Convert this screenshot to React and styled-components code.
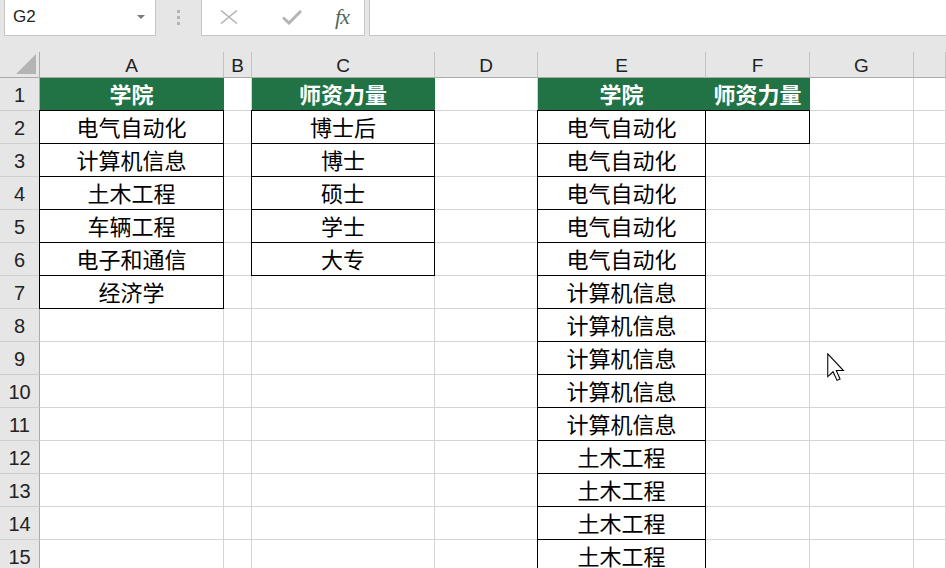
import React from 'react'
import styled, {createGlobalStyle, css} from 'styled-components'

const GlobalStyle = createGlobalStyle`
  html, body {
    margin: 0;
    padding: 0;
    background: #ffffff;
  }
  * {
    box-sizing: border-box;
  }
`

const CJK = `'Noto Sans CJK SC', 'Noto Sans', sans-serif`
const GREEN = '#217346'
const GRID = '#d4d4d4'
const HEAD_BG = '#e6e6e6'

const Page = styled.div`
  position: relative;
  width: 946px;
  height: 568px;
  overflow: hidden;
  background: ${HEAD_BG};
`

const Toolbar = styled.div`
  display: flex;
  align-items: flex-start;
  height: 36px;
  padding-left: 4px;
  background: ${HEAD_BG};
`

const NameBox = styled.div`
  display: flex;
  align-items: center;
  justify-content: space-between;
  width: 152px;
  height: 36px;
  padding: 0 10px 2px 8px;
  background: #fff;
  border: 1px solid #c6c6c6;
  border-top: 0;
  font-family: 'Liberation Sans', Arial, sans-serif;
  font-size: 17px;
  color: #222;
`

const Caret = styled.span`
  width: 0;
  height: 0;
  border-left: 4px solid transparent;
  border-right: 4px solid transparent;
  border-top: 4px solid #7a7a7a;
  margin-top: 1px;
`

const Grip = styled.div`
  display: flex;
  flex-direction: column;
  align-items: center;
  justify-content: center;
  gap: 3px;
  width: 45px;
  height: 34px;

  span {
    width: 3px;
    height: 3px;
    background: #b4b4b4;
  }
`

const FuncBox = styled.div`
  display: flex;
  align-items: center;
  width: 164px;
  height: 36px;
  padding: 0 0 1px 18px;
  background: #fff;
  border: 1px solid #c6c6c6;
  border-top: 0;
`

const FuncIcon = styled.div`
  display: flex;
  align-items: center;
  justify-content: center;
  width: 54px;
  height: 100%;

  &:first-child {
    justify-content: flex-start;
  }
`

const Fx = styled.span`
  font-family: 'Liberation Serif', 'Times New Roman', serif;
  font-style: italic;
  font-size: 22px;
  color: #4f685a;
  letter-spacing: -1px;
  padding-left: 4px;
`

const FormulaInput = styled.div`
  flex: 1;
  height: 36px;
  margin-left: 4px;
  background: #fff;
  border-left: 1px solid #c6c6c6;
  border-bottom: 1px solid #c6c6c6;
`

const Gap = styled.div`
  height: 16px;
`

const Sheet = styled.div`
  display: grid;
  grid-template-columns: 40px 184px 28px 183px 103px 168px 104px 104px 1fr;
  grid-template-rows: 26px;
  grid-auto-rows: 33px;
  background: #fff;
`

const Corner = styled.div`
  position: relative;
  background: ${HEAD_BG};
  border-right: 1px solid #ababab;
  border-bottom: 1px solid #ababab;

  &::after {
    content: '';
    position: absolute;
    right: 3px;
    bottom: 3px;
    width: 0;
    height: 0;
    border-left: 20px solid transparent;
    border-bottom: 20px solid #b4b4b4;
  }
`

const ColHead = styled.div`
  display: flex;
  align-items: center;
  justify-content: center;
  padding-top: 3px;
  background: ${HEAD_BG};
  border-right: 1px solid #c2c2c2;
  border-bottom: 1px solid #ababab;
  font-family: 'Liberation Sans', Arial, sans-serif;
  font-size: 19px;
  color: #222;
`

const RowHead = styled.div`
  display: flex;
  align-items: center;
  justify-content: center;
  padding-top: 3px;
  background: ${HEAD_BG};
  border-right: 1px solid #ababab;
  border-bottom: 1px solid #cfcfcf;
  font-family: 'Liberation Sans', Arial, sans-serif;
  font-size: 20px;
  color: #222;
`

const Cell = styled.div`
  display: flex;
  align-items: center;
  justify-content: center;
  overflow: hidden;
  white-space: nowrap;
  padding-bottom: 2px;
  border-right: 1px solid ${GRID};
  border-bottom: 1px solid ${GRID};
  font-family: ${CJK};
  font-size: 22px;
  color: #000;

  ${({$kind}) =>
    $kind === 'head' &&
    css`
      background: ${GREEN};
      border-right-color: ${GREEN};
      border-bottom-color: ${GREEN};
      color: #fff;
      font-weight: 700;
    `}

  ${({$kind}) =>
    $kind === 'box' &&
    css`
      border-right-color: #000;
      border-bottom-color: #000;
      box-shadow: -1px -1px 0 #000, 0 -1px 0 #000, -1px 0 0 #000;
    `}
`

const Cursor = styled.svg`
  position: absolute;
  left: 827px;
  top: 353px;
`

const COLS = ['A', 'B', 'C', 'D', 'E', 'F', 'G', '']

const colA = ['电气自动化', '计算机信息', '土木工程', '车辆工程', '电子和通信', '经济学']
const colC = ['博士后', '博士', '硕士', '学士', '大专']
const colE = [
  ...Array(5).fill('电气自动化'),
  ...Array(5).fill('计算机信息'),
  ...Array(4).fill('土木工程'),
]

const buildRows = () => {
  const rows = []
  for (let r = 1; r <= 15; r++) {
    const cells = Array(8).fill(null).map(() => ({text: '', kind: undefined}))
    if (r === 1) {
      cells[0] = {text: '学院', kind: 'head'}
      cells[2] = {text: '师资力量', kind: 'head'}
      cells[4] = {text: '学院', kind: 'head'}
      cells[5] = {text: '师资力量', kind: 'head'}
    } else {
      const i = r - 2
      if (colA[i]) cells[0] = {text: colA[i], kind: 'box'}
      if (colC[i]) cells[2] = {text: colC[i], kind: 'box'}
      if (colE[i]) cells[4] = {text: colE[i], kind: 'box'}
      if (r === 2) cells[5] = {text: '', kind: 'box'}
    }
    rows.push(cells)
  }
  return rows
}

const rows = buildRows()

const App = () => {
  return (
    <>
      <GlobalStyle />
      <Page>
        <Toolbar>
          <NameBox>
            G2
            <Caret />
          </NameBox>
          <Grip>
            <span />
            <span />
            <span />
          </Grip>
          <FuncBox>
            <FuncIcon>
              <svg width="18" height="14" viewBox="0 0 18 14">
                <path d="M1 0.5 L17 13.5 M17 0.5 L1 13.5" stroke="#b5b5b5" strokeWidth="1.6" fill="none" />
              </svg>
            </FuncIcon>
            <FuncIcon>
              <svg width="20" height="15" viewBox="0 0 20 15">
                <path d="M1 7.5 L7 13 L19 1" stroke="#b5b5b5" strokeWidth="3" fill="none" />
              </svg>
            </FuncIcon>
            <FuncIcon>
              <Fx>fx</Fx>
            </FuncIcon>
          </FuncBox>
          <FormulaInput />
        </Toolbar>
        <Gap />
        <Sheet>
          <Corner />
          {COLS.map((c, i) => (
            <ColHead key={i}>{c}</ColHead>
          ))}
          {rows.map((cells, r) => (
            <React.Fragment key={r}>
              <RowHead>{r + 1}</RowHead>
              {cells.map((cell, c) => (
                <Cell key={c} $kind={cell.kind}>
                  {cell.text}
                </Cell>
              ))}
            </React.Fragment>
          ))}
        </Sheet>
        <Cursor width="19" height="29" viewBox="0 0 12.5 19">
          <path
            d="M0.5 0.5 L0.5 15.5 L4 12.3 L6.6 18 L8.6 17.1 L6.1 11.5 L10.8 11.5 Z"
            fill="#fff"
            stroke="#000"
            strokeWidth="0.7"
            strokeLinejoin="miter"
          />
        </Cursor>
      </Page>
    </>
  )
}

export default App
